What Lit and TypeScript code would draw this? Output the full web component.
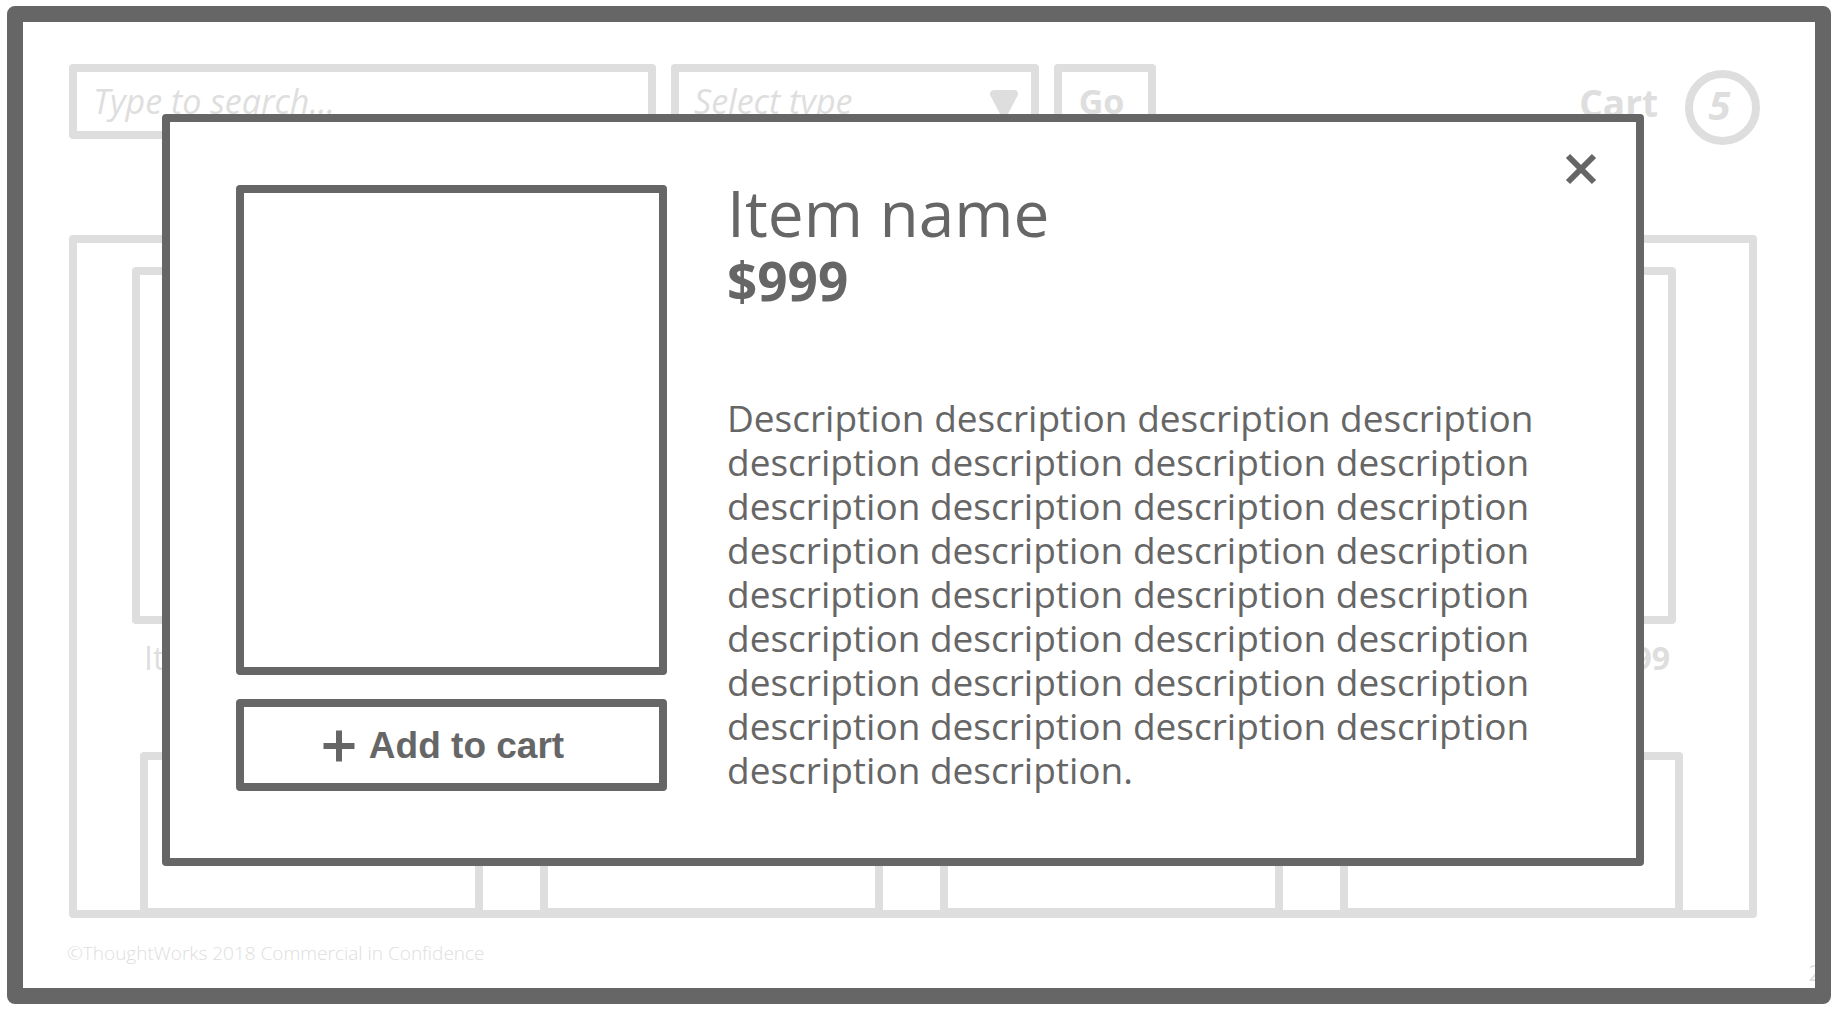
import { LitElement, html, css } from "lit";
import { customElement, property, state } from "lit/decorators.js";

interface Item {
  name: string;
  price: string;
}

interface Card {
  name?: string;
  price?: string;
}

const ITEM: Item = { name: "Item name", price: "$999" };
const CARDS: Card[] = [{ name: ITEM.name }, {}, {}, { price: ITEM.price }];
const DESCRIPTION = `Description ${"description ".repeat(32)}description.`;

@customElement("shop-header")
export class ShopHeader extends LitElement {
  @property({ type: Number }) count = 0;

  static styles = css`
    :host {
      display: flex;
      justify-content: space-between;
      align-items: flex-start;
    }
    * {
      box-sizing: border-box;
    }
    .search {
      display: grid;
      flex: 0 1 1087px;
      grid-template-columns: minmax(0, 587fr) minmax(0, 368fr) minmax(0, 102fr);
      gap: 15px;
    }
    .field {
      width: 100%;
      height: 75px;
      margin: 0;
      border: 8px solid var(--faint);
      border-radius: 4px;
      background: #fff;
      color: var(--faint);
      font: 34px/52px var(--sans);
    }
    .query {
      padding: 0 16px 1px;
      font-style: italic;
    }
    .query::placeholder {
      color: var(--faint);
      opacity: 1;
    }
    .type {
      position: relative;
    }
    .select {
      padding: 0 56px 1px 15px;
      font-style: italic;
      appearance: none;
    }
    .arrow {
      position: absolute;
      top: 26px;
      right: 20px;
      width: 30px;
      height: 30px;
      pointer-events: none;
    }
    .go {
      padding: 0 7px 1px 0;
      font-weight: 700;
    }
    .cart {
      display: flex;
      align-items: center;
      gap: 27px;
      margin: 6px -3px 0 0;
      color: var(--faint);
      font: 700 37px/44px var(--sans);
      text-decoration: none;
    }
    .label {
      padding-bottom: 10px;
    }
    .count {
      display: grid;
      place-items: center;
      width: 75px;
      height: 75px;
      padding: 0 6px 6px 0;
      border: 8px solid var(--faint);
      border-radius: 50%;
      font-size: 40px;
      font-style: italic;
    }
  `;

  render() {
    return html`
      <form class="search" @submit=${(e: Event) => e.preventDefault()}>
        <input class="field query" type="search" aria-label="Search" placeholder="Type to search..." />
        <div class="type">
          <select class="field select" aria-label="Select type">
            <option>Select type</option>
          </select>
          <svg class="arrow" viewBox="0 0 30 30" aria-hidden="true">
            <path d="M5 4H25L15 23Z" fill="#dedede" stroke="#dedede" stroke-width="8" stroke-linejoin="round" />
          </svg>
        </div>
        <button class="field go" type="submit">Go</button>
      </form>
      <a class="cart" href="#cart">
        <span class="label">Cart</span>
        <span class="count">${this.count}</span>
      </a>
    `;
  }
}

@customElement("item-grid")
export class ItemGrid extends LitElement {
  @property({ attribute: false }) cards: Card[] = [];

  static styles = css`
    :host {
      display: flex;
      flex-direction: column;
      gap: 72px;
      box-sizing: border-box;
      padding-top: 24px;
      border: 8px solid var(--faint);
      border-radius: 4px;
    }
    * {
      box-sizing: border-box;
    }
    .row {
      display: grid;
      grid-template-columns: repeat(4, minmax(0, 1fr));
      gap: 57px;
      padding: 0 73px 0 55px;
    }
    .next {
      flex: 1;
      padding: 0 66px 0 63px;
      margin-bottom: -6px;
    }
    .thumb {
      border: 8px solid var(--faint);
      border-radius: 4px;
    }
    .photo {
      height: 357px;
    }
    .caption {
      display: flex;
      height: 56px;
      padding: 12px 6px 0 12px;
      color: var(--faint);
      font: 32px/44px var(--sans);
      white-space: nowrap;
    }
    .price {
      margin-left: auto;
      font-weight: 700;
    }
  `;

  render() {
    return html`
      <div class="row">
        ${this.cards.map(
          (card) => html`
            <article>
              <div class="thumb photo"></div>
              <div class="caption">
                ${card.name ? html`<span>${card.name}</span>` : null}
                ${card.price ? html`<span class="price">${card.price}</span>` : null}
              </div>
            </article>
          `
        )}
      </div>
      <div class="row next">${this.cards.map(() => html`<div class="thumb"></div>`)}</div>
    `;
  }
}

@customElement("item-dialog")
export class ItemDialog extends LitElement {
  @property({ attribute: false }) item!: Item;
  @property() description = "";

  static styles = css`
    :host {
      display: block;
      box-sizing: border-box;
      border: 8px solid var(--ink);
      border-radius: 4px;
      background: #fff;
      color: var(--ink);
      font-family: var(--sans);
    }
    * {
      box-sizing: border-box;
    }
    .body {
      display: grid;
      grid-template-columns: minmax(0, 431fr) minmax(0, 843fr);
      gap: 60px;
      padding: 63px 66px 66px;
    }
    .media {
      display: flex;
      flex-direction: column;
      gap: 24px;
    }
    .photo {
      height: 490px;
      border: 8px solid var(--ink);
      border-radius: 4px;
    }
    .add {
      display: flex;
      align-items: center;
      justify-content: center;
      gap: 14px;
      height: 92px;
      padding: 2px 16px 0 0;
      border: 8px solid var(--ink);
      border-radius: 4px;
      background: #fff;
      color: var(--ink);
      font: 700 37px/44px "Liberation Sans", Arial, sans-serif;
    }
    .icon {
      display: block;
      width: 32px;
      height: 32px;
      fill: none;
      stroke: currentColor;
      stroke-width: 6;
    }
    .name {
      margin: 0;
      font-size: 64px;
      font-weight: 400;
      line-height: 56px;
    }
    .price {
      margin: 8px 0 83px;
      font-size: 53px;
      font-weight: 700;
      line-height: 64px;
    }
    .text {
      margin: 0;
      font-size: 37px;
      line-height: 44px;
    }
    .close {
      position: absolute;
      top: 31px;
      right: 39px;
      padding: 0;
      border: 0;
      background: none;
      color: inherit;
    }
  `;

  render() {
    return html`
      <div class="body">
        <div class="media">
          <div class="photo"></div>
          <button class="add" type="button">
            <svg class="icon" viewBox="0 0 32 32" aria-hidden="true"><path d="M0.5 16H31.5M16 0.5V31.5" /></svg>
            Add to cart
          </button>
        </div>
        <div>
          <h1 class="name">${this.item.name}</h1>
          <p class="price">${this.item.price}</p>
          <p class="text">${this.description}</p>
        </div>
      </div>
      <button
        class="close"
        type="button"
        aria-label="Close"
        @click=${() => this.dispatchEvent(new CustomEvent("close"))}
      >
        <svg class="icon" viewBox="0 0 32 32" aria-hidden="true"><path d="M3 3L29 29M29 3L3 29" /></svg>
      </button>
    `;
  }
}

@customElement("app-root")
export class AppRoot extends LitElement {
  @state() private open = true;

  static styles = css`
    :host {
      --ink: #666;
      --faint: #dedede;
      --sans: "Open Sans", "Noto Sans", sans-serif;
      position: relative;
      display: flex;
      box-sizing: border-box;
      min-height: 100vh;
      padding: 6px 7px 8px;
      background: #fff;
    }
    .frame {
      display: flex;
      flex: 1;
      flex-direction: column;
      box-sizing: border-box;
      min-width: 0;
      padding: 42px 58px 0 46px;
      border: 16px solid var(--ink);
      border-radius: 8px;
      overflow: hidden;
    }
    .items {
      flex: 1;
      margin-top: 90px;
    }
    .footer {
      display: flex;
      justify-content: space-between;
      align-items: flex-start;
      height: 70px;
      margin: 0 -64px 0 -2px;
      padding-top: 22px;
      box-sizing: border-box;
      color: var(--faint);
      font: 300 19px/26px var(--sans);
    }
    .number {
      padding-top: 19px;
      font-size: 22px;
      font-weight: 400;
    }
    .dialog {
      position: absolute;
      top: 114px;
      left: 162px;
      right: 194px;
    }
  `;

  render() {
    return html`
      <main class="frame">
        <shop-header .count=${5}></shop-header>
        <item-grid class="items" .cards=${CARDS}></item-grid>
        <footer class="footer">
          <span>©ThoughtWorks 2018 Commercial in Confidence</span>
          <span class="number">2</span>
        </footer>
      </main>
      ${this.open
        ? html`<item-dialog
            class="dialog"
            role="dialog"
            aria-label="Item name"
            .item=${ITEM}
            .description=${DESCRIPTION}
            @close=${() => (this.open = false)}
          ></item-dialog>`
        : null}
    `;
  }
}
